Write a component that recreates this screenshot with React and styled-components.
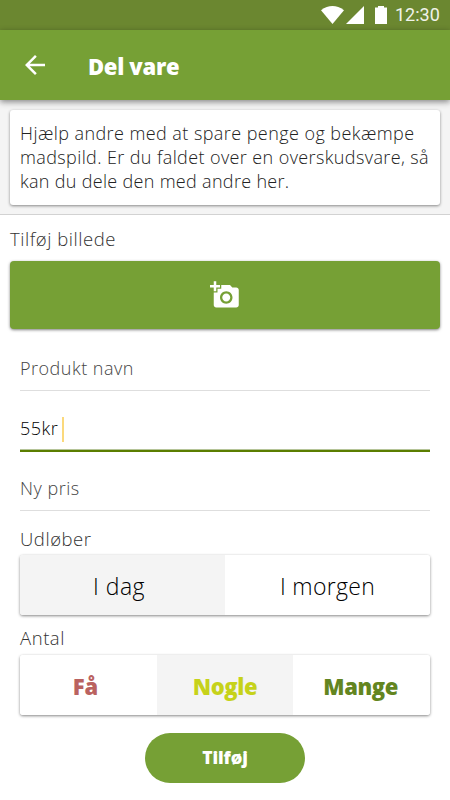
import React, { useState } from "react";
import styled, { createGlobalStyle } from "styled-components";
import { MdArrowBack, MdAddAPhoto } from "react-icons/md";

const GlobalStyle = createGlobalStyle`
  * {
    box-sizing: border-box;
  }
  body {
    margin: 0;
    background: #fff;
    font-family: "Open Sans", "Noto Sans", sans-serif;
  }
  button, input {
    font-family: inherit;
    border: none;
    padding: 0;
  }
`;

const Screen = styled.div`
  display: flex;
  flex-direction: column;
  width: 450px;
  height: 800px;
  overflow: hidden;
  background: #fff;
`;

const StatusBar = styled.div`
  display: flex;
  flex: none;
  align-items: center;
  height: 30px;
  padding-left: 321px;
  background: #6b8730;
`;

const StatusIcons = styled.svg`
  display: block;
  width: 66px;
  height: 20px;
  fill: #fff;
`;

const Clock = styled.span`
  margin-left: 8px;
  font-family: Roboto, sans-serif;
  font-size: 18px;
  line-height: 30px;
  color: #f0f3ea;
`;

const Header = styled.header`
  display: flex;
  flex: none;
  align-items: center;
  height: 70px;
  padding-left: 20px;
  background: #76a035;
  color: #fff;
  box-shadow: 0 2px 6px rgba(0, 0, 0, 0.45);
  z-index: 1;

  svg {
    width: 30px;
    height: 30px;
  }
`;

const Title = styled.h1`
  margin: 1px 0 0 38px;
  font-size: 22px;
  font-weight: 800;
  line-height: 30px;
  letter-spacing: -0.3px;
`;

const Intro = styled.section`
  flex: none;
  height: 115px;
  padding: 10px;
  background: #f4f4f4;
  border-bottom: 1px solid #d2d2d2;
`;

const IntroCard = styled.div`
  height: 95px;
  padding: 11px 10px;
  background: #fff;
  border-radius: 3px;
  box-shadow: 0 1px 3px rgba(0, 0, 0, 0.45);
`;

const Line = styled.p`
  margin: 0;
  font-size: 18px;
  font-weight: 300;
  line-height: 24px;
  letter-spacing: ${(props) => props.$spacing}px;
  white-space: nowrap;
  color: #222;
`;

const Form = styled.form`
  display: flex;
  flex-direction: column;
  padding: 12px 10px 0;
`;

const Label = styled.div`
  height: 24px;
  font-size: 18.5px;
  font-weight: 300;
  line-height: 24px;
  letter-spacing: 0.55px;
  color: #333;
`;

const PhotoButton = styled.button`
  display: flex;
  align-items: center;
  justify-content: center;
  height: 68px;
  margin-top: 10px;
  background: #76a035;
  color: #fff;
  border-radius: 4px;
  box-shadow: 0 1px 3px rgba(0, 0, 0, 0.5);

  svg {
    width: 30px;
    height: 30px;
  }
`;

const Fields = styled.div`
  display: flex;
  flex-direction: column;
  padding: 2px 10px 0;
`;

const Field = styled.div`
  display: flex;
  align-items: center;
  height: 60px;
  padding-top: 13px;
  font-size: 18px;
  font-weight: 300;
  letter-spacing: 0.5px;
  color: ${(props) => (props.$active ? "#000" : "#444")};
  box-shadow: ${(props) =>
    props.$active
      ? "inset 0 -1px #5b7e00, 0 1px #5b7e00, inset 0 -2px #b5c498"
      : "inset 0 -1px #dedede"};
`;

const Caret = styled.span`
  width: 1.5px;
  height: 25px;
  margin: 3px 0 0 4px;
  background: #fbd97c;
`;

const Group = styled.div`
  display: flex;
  flex-direction: column;
  padding-top: ${(props) => props.$top}px;
`;

const Segments = styled.div`
  display: grid;
  grid-template-columns: repeat(${(props) => props.$count}, minmax(0, 1fr));
  height: 60px;
  margin-top: ${(props) => props.$gap}px;
  border-radius: 3px;
  box-shadow: 0 1px 3px rgba(0, 0, 0, 0.48);
  overflow: hidden;
`;

const Segment = styled.button`
  padding: ${(props) => (props.$bold ? 2 : 1)}px ${(props) => props.$inset || 0}px 0 0;
  background: ${(props) => (props.$selected ? "#f4f4f4" : "#fff")};
  color: ${(props) => props.$color || "#000"};
  font-size: ${(props) => (props.$bold ? 22 : 23)}px;
  font-weight: ${(props) => (props.$bold ? 800 : 300)};
  letter-spacing: ${(props) => props.$spacing || 0}px;
`;

const Submit = styled.button`
  align-self: center;
  width: 160px;
  height: 50px;
  margin-top: 18px;
  padding-bottom: 2px;
  background: #76a035;
  color: #fff;
  border-radius: 25px;
  font-size: 17.5px;
  font-weight: 800;
  letter-spacing: -0.1px;
`;

const days = [
  { name: "I dag", spacing: 0.5, inset: 7 },
  { name: "I morgen", spacing: 0.3, inset: 0 },
];

const amounts = [
  { name: "Få", color: "#ba6260", spacing: -0.2, inset: 6 },
  { name: "Nogle", color: "#c6d21a", spacing: -0.4, inset: 0 },
  { name: "Mange", color: "#638520", spacing: -0.4, inset: 2 },
];

function App() {
  const [expires, setExpires] = useState("I dag");
  const [amount, setAmount] = useState("Nogle");

  return (
    <>
      <GlobalStyle />
      <Screen>
        <StatusBar>
          <StatusIcons viewBox="0 0 66 20">
            <path d="M0 5.2Q11.5-3.2 23 5.2L11.5 19z" />
            <path d="M25 19L43 1v18z" />
            <path d="M54 2.5h3V1h6v1.500h3V19H54z" />
          </StatusIcons>
          <Clock>12:30</Clock>
        </StatusBar>
        <Header>
          <MdArrowBack />
          <Title>Del vare</Title>
        </Header>
        <Intro>
          <IntroCard>
            <Line $spacing={0.43}>Hjælp andre med at spare penge og bekæmpe</Line>
            <Line $spacing={0.39}>madspild. Er du faldet over en overskudsvare, så</Line>
            <Line $spacing={0.31}>kan du dele den med andre her.</Line>
          </IntroCard>
        </Intro>
        <Form onSubmit={(e) => e.preventDefault()}>
          <Label>Tilføj billede</Label>
          <PhotoButton type="button" aria-label="Tilføj billede">
            <MdAddAPhoto />
          </PhotoButton>
          <Fields>
            <Field>Produkt navn</Field>
            <Field $active>
              55kr
              <Caret />
            </Field>
            <Field>Ny pris</Field>
            <Group $top={16}>
              <Label>Udløber</Label>
              <Segments $gap={4} $count={days.length}>
                {days.map((day) => (
                  <Segment
                    key={day.name}
                    type="button"
                    $spacing={day.spacing}
                    $inset={day.inset}
                    $selected={day.name === expires}
                    onClick={() => setExpires(day.name)}
                  >
                    {day.name}
                  </Segment>
                ))}
              </Segments>
            </Group>
            <Group $top={11}>
              <Label>Antal</Label>
              <Segments $gap={5} $count={amounts.length}>
                {amounts.map((a) => (
                  <Segment
                    key={a.name}
                    type="button"
                    $bold
                    $color={a.color}
                    $spacing={a.spacing}
                    $inset={a.inset}
                    $selected={a.name === amount}
                    onClick={() => setAmount(a.name)}
                  >
                    {a.name}
                  </Segment>
                ))}
              </Segments>
            </Group>
          </Fields>
          <Submit type="submit">Tilføj</Submit>
        </Form>
      </Screen>
    </>
  );
}

export default App;
